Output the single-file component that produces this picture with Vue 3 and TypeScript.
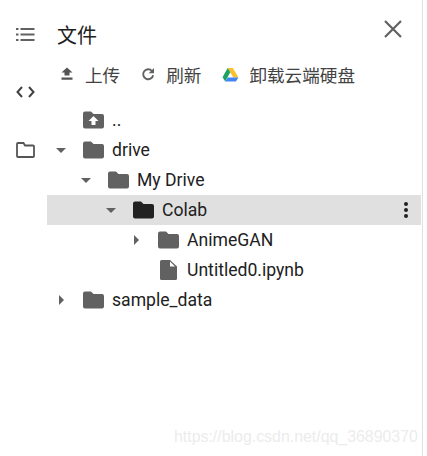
<template>
  <div class="window">
    <nav class="rail">
      <svg class="rail-icon" viewBox="0 0 19 15" width="19" height="15">
        <path d="M0 1h2.500v2H0zM0 6.500h2.500v2H0zM0 12h2.500v2H0zM4.500 1h14v2h-14zM4.500 6.500h14v2h-14zM4.500 12h14v2h-14z" fill="#616161" />
      </svg>
      <svg class="rail-icon" viewBox="0 0 19 12" width="19" height="12">
        <path d="M6 1 1.500 6 6 11M13 1l4.500 5-4.500 5" fill="none" stroke="#424242" stroke-width="2" />
      </svg>
      <svg class="rail-icon" viewBox="0 0 19 16" width="19" height="16">
        <path d="M1 2.500V14a1 1 0 0 0 1 1h15a1 1 0 0 0 1-1V4.500a1 1 0 0 0-1-1H9L7.500 1H2A1 1 0 0 0 1 2z" fill="none" stroke="#555" stroke-width="1.800" />
      </svg>
    </nav>
    <main class="panel">
      <header class="head">
        <span class="title">文件</span>
        <svg class="close" viewBox="0 0 18 18" width="18" height="18">
          <path d="M1 1 17 17M17 1 1 17" stroke="#616161" stroke-width="2.200" />
        </svg>
      </header>
      <div class="toolbar">
        <span class="tool">
          <svg viewBox="0 0 14 14" width="14" height="14"><path d="M4.500 8.500V5.500H1.500L7 .5l5.500 5h-3v3zM1.500 10.500h11v2.200h-11z" fill="#555" /></svg>
          上传
        </span>
        <span class="tool">
          <svg viewBox="0 0 14 14" width="14" height="14"><path d="M11 4A5 5 0 1 0 12.100 8.200" fill="none" stroke="#616161" stroke-width="1.900" /><path d="M13 1v5.300H7.700z" fill="#616161" /></svg>
          刷新
        </span>
        <span class="tool drive">
          <svg viewBox="0 0 18 16" width="17" height="15">
            <path d="M6 1h5.500l6 10.200h-5.500z" fill="#fbc02d" />
            <path d="M6 1 .5 10.800l2.800 4.700 5.500-9.800z" fill="#1ea362" />
            <path d="M3.300 15.500h11.400l2.800-4.300H6z" fill="#4285f4" />
          </svg>
          卸载云端硬盘
        </span>
      </div>
      <ul class="tree">
        <li
          v-for="row in rows"
          :key="row.name"
          class="row"
          :class="{ selected: row.selected }"
          :style="{ paddingLeft: row.depth * 25 + 9 + 'px' }"
        >
          <span class="caret" :class="row.caret"></span>
          <svg v-if="row.kind === 'file'" class="node-icon" viewBox="0 0 21 20" width="21" height="20">
            <path d="M3.500 0h8.500L19 6.500V18.500a1.500 1.500 0 0 1-1.500 1.500h-14A1.500 1.500 0 0 1 2 18.500V1.500A1.500 1.500 0 0 1 3.500 0z" fill="#616161" />
            <path d="M12 1.500v5h5z" fill="#fff" />
          </svg>
          <svg v-else class="node-icon" viewBox="0 0 21 18" width="21" height="18">
            <path
              d="M2 .5h6L10.500 3H19a2 2 0 0 1 2 2v10.500a2 2 0 0 1-2 2H2a2 2 0 0 1-2-2V2.500a2 2 0 0 1 2-2z"
              :fill="row.selected ? '#212121' : '#616161'"
            />
            <path v-if="row.kind === 'up'" d="M10.500 5 15.500 10H12.500V14H8.500V10H5.500z" fill="#fff" />
          </svg>
          <span class="name">{{ row.name }}</span>
          <svg v-if="row.selected" class="more" viewBox="0 0 4 16" width="4" height="16">
            <circle cx="2" cy="2" r="2" fill="#212121" />
            <circle cx="2" cy="8" r="2" fill="#212121" />
            <circle cx="2" cy="14" r="2" fill="#212121" />
          </svg>
        </li>
      </ul>
    </main>
    <span class="mark">https://blog.csdn.net/qq_36890370</span>
  </div>
</template>

<script setup lang="ts">
type Row = {
  name: string
  depth: number
  caret: string
  kind: 'folder' | 'file' | 'up'
  selected?: boolean
}

const rows: Row[] = [
  { name: '..', depth: 0, caret: 'none', kind: 'up' },
  { name: 'drive', depth: 0, caret: 'open', kind: 'folder' },
  { name: 'My Drive', depth: 1, caret: 'open', kind: 'folder' },
  { name: 'Colab', depth: 2, caret: 'open', kind: 'folder', selected: true },
  { name: 'AnimeGAN', depth: 3, caret: 'closed', kind: 'folder' },
  { name: 'Untitled0.ipynb', depth: 3, caret: 'none', kind: 'file' },
  { name: 'sample_data', depth: 0, caret: 'closed', kind: 'folder' }
]
</script>

<style>
html,
body {
  background: #fff;
}
</style>

<style scoped>
.window {
  position: relative;
  display: flex;
  width: 423px;
  height: 456px;
  box-sizing: border-box;
  border-right: 1px solid #e0e0e0;
  background: #fff;
  font-family: Roboto, "Noto Sans CJK SC", sans-serif;
  color: #212121;
  overflow: hidden;
}

.rail {
  flex: 0 0 47px;
  display: flex;
  flex-direction: column;
  align-items: flex-start;
  gap: 44px;
  padding: 27px 0 0 16px;
  box-sizing: border-box;
}

.rail-icon {
  display: block;
}

.panel {
  flex: 1;
  min-width: 0;
  padding-right: 1px;
}

.head {
  display: flex;
  justify-content: space-between;
  align-items: center;
  height: 30px;
  padding: 19px 19px 0 10px;
}

.title {
  font-size: 20px;
}

.close {
  margin-top: -11px;
}

.toolbar {
  display: flex;
  align-items: center;
  gap: 21px;
  height: 30px;
  margin-top: 10px;
  padding-left: 13px;
}

.tool {
  display: flex;
  align-items: center;
  gap: 11px;
  font-size: 17.6px;
  color: #424242;
}

.tool.drive {
  gap: 10px;
}

.tree {
  list-style: none;
  margin: 16px 0 0;
  padding: 0;
}

.row {
  display: flex;
  align-items: center;
  height: 30px;
  position: relative;
}

.row.selected {
  background: #e0e0e0;
}

.caret {
  flex: 0 0 10px;
  width: 10px;
  height: 0;
  margin-right: 17px;
}

.caret.open {
  width: 0;
  flex-basis: 0;
  margin: 0 17px 0 0;
  border-left: 5px solid transparent;
  border-right: 5px solid transparent;
  border-top: 5px solid #616161;
}

.caret.closed {
  width: 0;
  flex-basis: 0;
  margin: 0 19px 0 3px;
  border-top: 5px solid transparent;
  border-bottom: 5px solid transparent;
  border-left: 5px solid #616161;
}

.node-icon {
  flex: none;
}

.name {
  margin-left: 8px;
  font-size: 17.6px;
  color: #212121;
}

.more {
  position: absolute;
  right: 13px;
  top: 7px;
}

.mark {
  position: absolute;
  left: 174px;
  top: 428px;
  font-family: "Liberation Sans", sans-serif;
  font-size: 15.9px;
  color: #ececec;
}
</style>
